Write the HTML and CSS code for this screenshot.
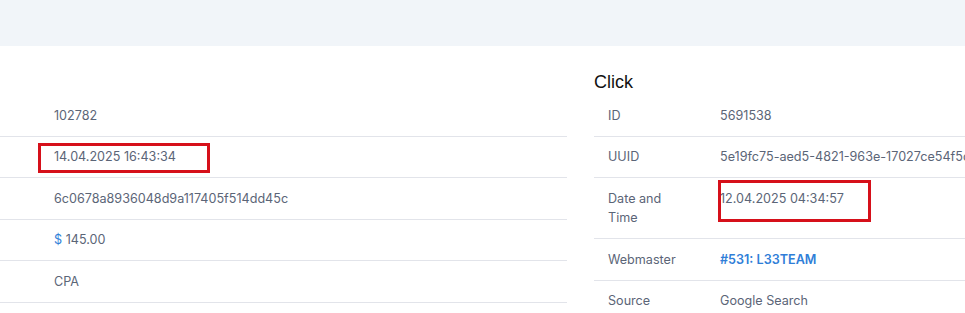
FILE: index.html
```html
<!DOCTYPE html>
<html lang="en">
<head>
    <meta charset="UTF-8">
    <meta name="viewport" content="width=device-width, initial-scale=1.0">
    <title>Lead details</title>
    <link rel="stylesheet" href="styles.css">
</head>
<body>
    <div class="top-bar"></div>

    <div class="details-grid">
        <div class="details-block">
            <h2 class="block-title">&nbsp;</h2>
            <table class="details details-cut">
                <tr><th></th><td>102782</td></tr>
                <tr><th></th><td><span class="marked">14.04.2025 16:43:34<span class="mark-box mark-left"></span></span></td></tr>
                <tr><th></th><td>6c0678a8936048d9a117405f514dd45c</td></tr>
                <tr><th></th><td><span class="currency">$</span> 145.00</td></tr>
                <tr><th></th><td>CPA</td></tr>
            </table>
        </div>

        <div class="details-block">
            <h2 class="block-title">Click</h2>
            <table class="details">
                <tr><th>ID</th><td>5691538</td></tr>
                <tr><th>UUID</th><td>5e19fc75-aed5-4821-963e-17027ce54f5c</td></tr>
                <tr><th>Date and Time</th><td><span class="marked">12.04.2025 04:34:57<span class="mark-box mark-right"></span></span></td></tr>
                <tr><th>Webmaster</th><td><a class="link" href="#">#531: L33TEAM</a></td></tr>
                <tr><th>Source</th><td>Google Search</td></tr>
            </table>
        </div>
    </div>
</body>
</html>
```

FILE: styles.css
```css
body {
    margin: 0;
    font-family: Inter, "Noto Sans", sans-serif;
    font-size: 12.6px;
    color: #5b6577;
    background: #fff;
    overflow: hidden;
}

.top-bar {
    height: 46px;
    background: #f1f5f9;
}

.details-grid {
    display: grid;
    grid-template-columns: 567px 567px;
    column-gap: 27px;
    padding-top: 26px;
}

.block-title {
    margin: 0 0 2px;
    font-family: "Liberation Sans", Arial, sans-serif;
    font-size: 18px;
    font-weight: normal;
    color: #111;
    line-height: normal;
}

.details {
    width: 100%;
    border-collapse: collapse;
}

.details th,
.details td {
    padding: 10.5px 14px;
    line-height: 19.5px;
    text-align: left;
    vertical-align: top;
    border-bottom: 1px solid #e2e4ea;
}

.details th {
    width: 84px;
    font-weight: normal;
}

.details-cut th {
    width: 12px;
}

.marked {
    position: relative;
}

.mark-box {
    position: absolute;
    border: 3px solid #d6101a;
}

.mark-left {
    left: -16px;
    top: -6px;
    width: 166px;
    height: 24px;
}

.mark-right {
    left: -2px;
    top: -11px;
    width: 147px;
    height: 36px;
}

.currency {
    color: #2f7ed8;
}

.link {
    color: #2f7ed8;
    font-weight: 600;
    text-decoration: none;
}
```
